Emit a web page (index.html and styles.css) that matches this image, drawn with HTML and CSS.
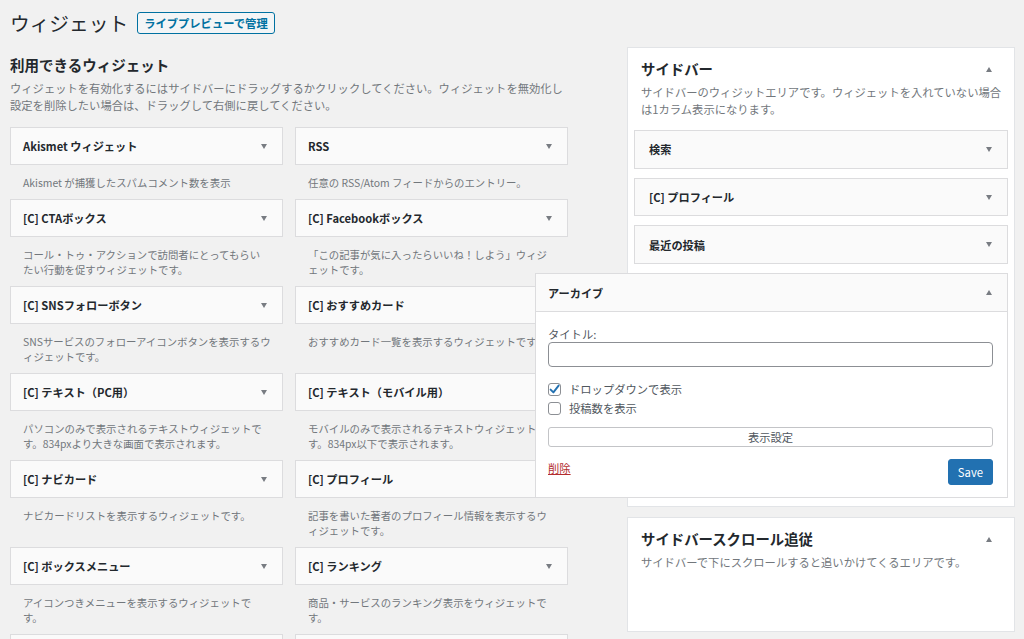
FILE: index.html
```html
<!DOCTYPE html>
<html lang="ja">
<head>
<meta charset="utf-8">
<title>ウィジェット</title>
<link rel="stylesheet" href="styles.css">
</head>
<body>
<div class="wrap">
  <div class="page-head">
    <h1>ウィジェット</h1>
    <a class="btn-outline">ライブプレビューで管理</a>
  </div>
  <div class="columns">
    <div class="available">
      <h2>利用できるウィジェット</h2>
      <p class="lead">ウィジェットを有効化するにはサイドバーにドラッグするかクリックしてください。ウィジェットを無効化し設定を削除したい場合は、ドラッグして右側に戻してください。</p>
      <div class="widget-grid">
        <div class="w-item"><div class="w-card"><span>Akismet ウィジェット</span><i class="arrow-down"></i></div><p class="w-desc">Akismet が捕獲したスパムコメント数を表示</p></div>
        <div class="w-item"><div class="w-card"><span>RSS</span><i class="arrow-down"></i></div><p class="w-desc">任意の RSS/Atom フィードからのエントリー。</p></div>
        <div class="w-item"><div class="w-card"><span>[C] CTAボックス</span><i class="arrow-down"></i></div><p class="w-desc">コール・トゥ・アクションで訪問者にとってもらいたい行動を促すウィジェットです。</p></div>
        <div class="w-item"><div class="w-card"><span>[C] Facebookボックス</span><i class="arrow-down"></i></div><p class="w-desc">「この記事が気に入ったらいいね！しよう」ウィジェットです。</p></div>
        <div class="w-item"><div class="w-card"><span>[C] SNSフォローボタン</span><i class="arrow-down"></i></div><p class="w-desc w-desc-wide">SNSサービスのフォローアイコンボタンを表示するウィジェットです。</p></div>
        <div class="w-item"><div class="w-card"><span>[C] おすすめカード</span><i class="arrow-down"></i></div><p class="w-desc">おすすめカード一覧を表示するウィジェットです。</p></div>
        <div class="w-item"><div class="w-card"><span>[C] テキスト（PC用）</span><i class="arrow-down"></i></div><p class="w-desc">パソコンのみで表示されるテキストウィジェットです。834pxより大きな画面で表示されます。</p></div>
        <div class="w-item"><div class="w-card"><span>[C] テキスト（モバイル用）</span><i class="arrow-down"></i></div><p class="w-desc">モバイルのみで表示されるテキストウィジェットです。834px以下で表示されます。</p></div>
        <div class="w-item"><div class="w-card"><span>[C] ナビカード</span><i class="arrow-down"></i></div><p class="w-desc">ナビカードリストを表示するウィジェットです。</p></div>
        <div class="w-item"><div class="w-card"><span>[C] プロフィール</span><i class="arrow-down"></i></div><p class="w-desc">記事を書いた著者のプロフィール情報を表示するウィジェットです。</p></div>
        <div class="w-item"><div class="w-card"><span>[C] ボックスメニュー</span><i class="arrow-down"></i></div><p class="w-desc">アイコンつきメニューを表示するウィジェットです。</p></div>
        <div class="w-item"><div class="w-card"><span>[C] ランキング</span><i class="arrow-down"></i></div><p class="w-desc">商品・サービスのランキング表示をウィジェットです。</p></div>
        <div class="w-item"><div class="w-card w-card-empty"></div></div>
        <div class="w-item"><div class="w-card w-card-empty"></div></div>
      </div>
    </div>
    <div class="sidebars">
      <div class="sb-panel">
        <div class="sb-head">
          <div class="sb-title"><span>サイドバー</span><i class="arrow-up"></i></div>
          <p class="sb-desc">サイドバーのウィジットエリアです。ウィジェットを入れていない場合は1カラム表示になります。</p>
        </div>
        <div class="sb-widgets">
          <div class="w-card sb-card"><span>検索</span><i class="arrow-down"></i></div>
          <div class="w-card sb-card"><span>[C] プロフィール</span><i class="arrow-down"></i></div>
          <div class="w-card sb-card"><span>最近の投稿</span><i class="arrow-down"></i></div>
          <div class="arch">
            <div class="arch-head"><span>アーカイブ</span><i class="arrow-up"></i></div>
            <div class="arch-body">
              <label class="field-label">タイトル:</label>
              <div class="text-input"></div>
              <div class="checks">
                <div class="check-row"><span class="cb"><svg width="13" height="13" viewBox="0 0 13 13"><path d="M2.6 6.6 L5.4 9.4 L10.6 2.6" fill="none" stroke="#2271b1" stroke-width="1.9" stroke-linecap="round" stroke-linejoin="round"/></svg></span><span class="cb-label">ドロップダウンで表示</span></div>
                <div class="check-row"><span class="cb"></span><span class="cb-label">投稿数を表示</span></div>
              </div>
              <div class="btn-wide">表示設定</div>
              <div class="arch-foot">
                <a class="del">削除</a>
                <span class="btn-save">Save</span>
              </div>
            </div>
          </div>
        </div>
      </div>
      <div class="sb-panel sb-panel-2">
        <div class="sb-head">
          <div class="sb-title"><span>サイドバースクロール追従</span><i class="arrow-up"></i></div>
          <p class="sb-desc">サイドバーで下にスクロールすると追いかけてくるエリアです。</p>
        </div>
      </div>
    </div>
  </div>
</div>
</body>
</html>
```

FILE: styles.css
```css
* { box-sizing: border-box; }

html, body {
  margin: 0;
  height: 639px;
  overflow: hidden;
}

body {
  background: #f1f1f1;
  font-family: "Noto Sans CJK JP", "Noto Sans", sans-serif;
  color: #23282d;
  font-size: 11.3px;
  text-spacing-trim: space-all;
}

.wrap {
  padding-left: 10px;
}

.page-head {
  display: flex;
  align-items: center;
  gap: 9px;
  height: 46px;
}

.page-head h1 {
  margin: 0;
  font-size: 19.7px;
  font-weight: 400;
  line-height: 28px;
  color: #23282d;
}

.btn-outline {
  display: inline-block;
  height: 22px;
  line-height: 20px;
  padding: 0 6px;
  border: 1px solid #0071a1;
  border-radius: 3px;
  background: #f3f5f6;
  color: #0071a1;
  font-size: 11.3px;
  font-weight: 700;
}

.columns {
  display: flex;
  gap: 60px;
  margin-top: 1px;
}

.available {
  width: 557px;
  flex: none;
}

.available h2 {
  margin: 8px 0 0;
  font-size: 14.5px;
  line-height: 20px;
  font-weight: 700;
}

.lead {
  margin: 5px 0 0;
  line-height: 17px;
  color: #72777c;
}

.widget-grid {
  margin-top: 13px;
  display: grid;
  grid-template-columns: 273px 273px;
  column-gap: 12px;
}

.w-card {
  height: 38px;
  border: 1px solid #dcdcde;
  background: #fafafa;
  display: flex;
  align-items: center;
  justify-content: space-between;
  padding: 0 15px 0 12px;
  font-weight: 700;
  font-size: 11.2px;
  line-height: 16px;
  color: #23282d;
}

.w-desc {
  margin: 0;
  padding: 10px 15px 9px 13px;
  font-size: 10.4px;
  line-height: 15px;
  color: #72777c;
}

.w-desc-wide {
  padding-right: 8px;
}

.arrow-down {
  display: block;
  width: 0;
  height: 0;
  border-left: 3.5px solid transparent;
  border-right: 3.5px solid transparent;
  border-top: 5px solid #787c82;
}

.arrow-up {
  display: block;
  width: 0;
  height: 0;
  border-left: 3.5px solid transparent;
  border-right: 3.5px solid transparent;
  border-bottom: 5px solid #787c82;
}

.sidebars {
  width: 388px;
  flex: none;
}

.sb-panel {
  background: #fff;
  border: 1px solid #e2e4e7;
  padding: 0 6px 8px;
}

.sb-panel-2 {
  margin-top: 10px;
  min-height: 115px;
}

.sb-head {
  padding: 11px 0 0 7px;
}

.sb-title {
  display: flex;
  justify-content: space-between;
  align-items: center;
  font-size: 14.4px;
  font-weight: 700;
  line-height: 20px;
}

.sb-title .arrow-up {
  margin-right: 16px;
}

.sb-desc {
  margin: 5px 0 0;
  line-height: 17px;
  color: #72777c;
}

.sb-widgets {
  margin-top: 12px;
  display: flex;
  flex-direction: column;
  gap: 9px;
}

.sb-card {
  height: 38.7px;
  padding-left: 14px;
}

.arch {
  position: relative;
  z-index: 2;
  margin-left: -99px;
  border: 1px solid #dcdcde;
  background: #fff;
}

.arch-head {
  height: 38px;
  border-bottom: 1px solid #dcdcde;
  background: #fafafa;
  display: flex;
  align-items: center;
  justify-content: space-between;
  padding: 0 15px 0 12px;
  font-weight: 700;
  font-size: 11.2px;
}

.arch-body {
  padding: 15px 14px 12px 12px;
}

.field-label {
  display: block;
  line-height: 15px;
  color: #50575e;
}

.text-input {
  height: 25px;
  border: 1px solid #8c8f94;
  border-radius: 4px;
  background: #fff;
}

.checks {
  margin-top: 16px;
  display: flex;
  flex-direction: column;
  gap: 6px;
}

.check-row {
  display: flex;
  align-items: center;
  gap: 8px;
  height: 13px;
}

.cb {
  width: 13px;
  height: 13px;
  border: 1px solid #8c8f94;
  border-radius: 3px;
  background: #fff;
  position: relative;
  flex: none;
}

.cb svg {
  position: absolute;
  left: -1px;
  top: -1px;
}

.cb-label {
  line-height: 13px;
  color: #50575e;
}

.btn-wide {
  margin-top: 12px;
  height: 20px;
  border: 1px solid #c3c4c7;
  border-radius: 3px;
  background: #fff;
  text-align: center;
  line-height: 18px;
  color: #50575e;
}

.arch-foot {
  margin-top: 12px;
  display: flex;
  justify-content: space-between;
  align-items: flex-start;
}

.del {
  line-height: 18px;
  color: #b32d2e;
  text-decoration: underline;
}

.btn-save {
  height: 26px;
  line-height: 24px;
  padding: 0 9px;
  border: 1px solid #2271b1;
  border-radius: 3px;
  background: #2271b1;
  color: #fff;
}
```
